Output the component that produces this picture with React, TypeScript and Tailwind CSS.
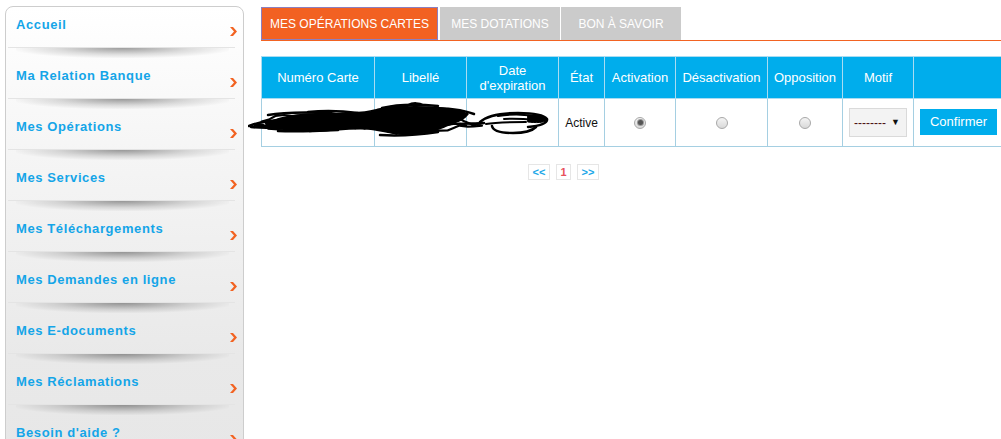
import React from "react";

const items = [
  "Accueil",
  "Ma Relation Banque",
  "Mes Opérations",
  "Mes Services",
  "Mes Téléchargements",
  "Mes Demandes en ligne",
  "Mes E-documents",
  "Mes Réclamations",
  "Besoin d'aide ?",
];

function Chevron() {
  return (
    <svg width="7" height="9" viewBox="0 0 7 9">
      <polygon points="0,0 3,0 7,4.5 3,9 0,9 4,4.5" fill="#f26322" />
    </svg>
  );
}

function Radio({ checked }: { checked?: boolean }) {
  return (
    <div className="mx-auto flex h-[12px] w-[12px] items-center justify-center rounded-full border border-[#a9a9a9] bg-[linear-gradient(#f4f4f4,#d9d9d9)]">
      {checked && <div className="h-[5px] w-[5px] rounded-full bg-[#555] shadow-[0_0_0_1px_#999]" />}
    </div>
  );
}

function envelope(x: number): [number, number] {
  const lerp = (a: number, b: number, t: number) => a + (b - a) * t;
  if (x < 17) return [22, 27];
  if (x < 30) return [lerp(19, 14, (x - 17) / 13), lerp(28, 31, (x - 17) / 13)];
  if (x < 72) return [14, 31];
  if (x < 127) return [12, 28];
  if (x < 140) return [lerp(10, 7, (x - 127) / 13), lerp(30, 35, (x - 127) / 13)];
  if (x < 200) return [6, 35];
  if (x < 216) return [lerp(8, 17, (x - 200) / 16), lerp(33, 27, (x - 200) / 16)];
  return [22, 26];
}

function buildStrokes(): string {
  let seed = 11;
  const rnd = () => {
    seed = (seed * 9301 + 49297) % 233280;
    return seed / 233280;
  };
  const out: string[] = [];
  for (let k = 0; k < 22; k++) {
    const f = rnd();
    const x0 = rnd() * 180;
    const len = 30 + rnd() * 90;
    const x1 = Math.min(234, x0 + len);
    let d = "";
    for (let x = x0; x <= x1; x += 5 + rnd() * 4) {
      const [t, b] = envelope(x);
      const y = t + (b - t) * f + (rnd() - 0.5) * 3;
      d += (d ? " L" : "M") + x.toFixed(1) + "," + y.toFixed(1);
    }
    out.push(d);
  }
  return out.join(" ");
}

const strokesD = buildStrokes();

function Scribble() {
  return (
    <svg
      className="pointer-events-none absolute left-[-13px] top-[44px]"
      width="305"
      height="40"
      viewBox="0 0 305 40"
    >
      <g fill="none" stroke="#000" strokeLinecap="round" strokeLinejoin="round">
        <path
          fill="#000"
          strokeWidth="1.5"
          d="M18,24 C28,18 40,16 52,15 C62,13 72,15 84,14 C100,12 114,14 127,10 C142,7 160,6 182,7 C198,8 210,10 220,14 C216,20 206,23 196,27 C182,33 166,35 152,34 C140,33 131,30 120,29 C104,28 90,30 72,31 C52,31 34,30 20,29 Z"
        />
        <path strokeWidth="2.2" d={strokesD} />
        <path strokeWidth="2.5" d="M1,26 C8,23 14,22 22,21 L40,19" />
        <path strokeWidth="2.5" d="M3,27 C14,28 24,28 34,28" />
        <path strokeWidth="2.5" d="M20,15 C40,12 60,13 75,12" />
        <path strokeWidth="2.5" d="M60,12 C80,10 95,11 110,13" />
        <path strokeWidth="2.5" d="M30,31 C50,32 70,31 90,30" />
        <path strokeWidth="2.5" d="M134,8 C150,4 170,4 190,6" />
        <path strokeWidth="2.5" d="M132,35 C150,36 170,35 190,32" />
        <path strokeWidth="2.5" d="M180,8 C200,8 215,10 226,14" />
        <path strokeWidth="2" d="M160,5 C165,2 172,3 175,5" />
        <path strokeWidth="2.5" d="M210,24 C220,23 228,24 236,23" />
        <path strokeWidth="2.5" d="M232,22 C240,15 255,13 270,13 C285,13 296,15 299,19 C300,23 292,26 280,27" />
        <path strokeWidth="2" d="M238,24 C248,22 262,22 278,22" />
        <path strokeWidth="2.5" d="M244,26 C245,31 252,33 265,33 C278,33 285,30 288,27" />
        <path strokeWidth="2" d="M250,16 C262,14 278,14 292,17" />
        <path strokeWidth="2" d="M256,19 C266,18 278,19 290,20" />
        <path strokeWidth="1" fill="#000" d="M280,15 C290,15 298,17 299,20 C296,23 288,23 280,22 Z" />
      </g>
    </svg>
  );
}

export default function App() {
  const font = { fontFamily: '"Liberation Sans", Arial, sans-serif' };
  return (
    <div className="flex h-[439px] w-[1001px] overflow-hidden bg-white" style={font}>
      {/* Sidebar */}
      <div className="ml-[5px] mt-[6px] h-[500px] w-[239px] shrink-0 rounded-t-[8px] border border-[#cdcdcd] bg-[linear-gradient(#ffffff,#f5f5f5_30%,#e9e9e9_70%,#e6e6e6)]">
        {items.map((label) => (
          <div key={label} className="relative h-[51px]">
            <div className="pl-[10px] pt-[10px] text-[13px] font-bold leading-[16px] tracking-[0.6px] text-[#14a5e8]">
              {label}
            </div>
            <div className="absolute right-[6px] top-[20px]">
              <Chevron />
            </div>
            <div className="absolute left-[2px] right-[8px] top-[40px] h-px bg-[#e4e4e4]" />
            <div className="absolute left-[10px] right-[14px] top-[41px] h-[10px] bg-[radial-gradient(ellipse_at_top,rgba(0,0,0,0.38),rgba(0,0,0,0.12)_45%,transparent_75%)]" />
          </div>
        ))}
      </div>

      {/* Main */}
      <div className="ml-[17px] flex-1">
        {/* Tabs */}
        <div className="mt-[7px] flex gap-px border-b border-[#f26322]">
          <div className="flex h-[33px] w-[177px] items-center justify-center border border-[#8c7fbf] bg-[#f26122] text-[12px] text-white">
            MES OPÉRATIONS CARTES
          </div>
          <div className="ml-px flex h-[33px] w-[120px] items-center justify-center bg-[#cbcbcb] text-[12px] text-white">
            MES DOTATIONS
          </div>
          <div className="flex h-[33px] w-[120px] items-center justify-center bg-[#cbcbcb] text-[12px] text-white">
            BON À SAVOIR
          </div>
        </div>

        {/* Table */}
        <div className="relative mt-[15px]">
          <table className="w-[760px] table-fixed border-collapse text-[13px]">
            <colgroup>
              <col className="w-[113px]" />
              <col className="w-[92px]" />
              <col className="w-[92px]" />
              <col className="w-[46px]" />
              <col className="w-[71px]" />
              <col className="w-[92px]" />
              <col className="w-[75px]" />
              <col className="w-[71px]" />
              <col className="w-[108px]" />
            </colgroup>
            <thead>
              <tr className="h-[42px] bg-[#00adec] text-white">
                {["Numéro Carte", "Libellé", "Date d'expiration", "État", "Activation", "Désactivation", "Opposition", "Motif", ""].map(
                  (h, i) => (
                    <th
                      key={i}
                      className={`border border-[#a9dcf2] px-0 text-center text-[13px] font-normal leading-[15px] ${i === 2 ? "px-[6px]" : ""}`}
                    >
                      {h}
                    </th>
                  )
                )}
              </tr>
            </thead>
            <tbody>
              <tr className="h-[48px]">
                <td className="border border-[#a5cfe2]" />
                <td className="border border-[#a5cfe2]" />
                <td className="border border-[#a5cfe2]" />
                <td className="border border-[#a5cfe2] text-center text-[12px] text-[#111]">Active</td>
                <td className="border border-[#a5cfe2]">
                  <Radio checked />
                </td>
                <td className="border border-[#a5cfe2]">
                  <Radio />
                </td>
                <td className="border border-[#a5cfe2]">
                  <Radio />
                </td>
                <td className="border border-[#a5cfe2]">
                  <div className="mx-auto flex h-[29px] w-[58px] items-center justify-between border border-[#dadada] bg-[#f3f3f3] pl-[4px] pr-[6px]">
                    <span className="text-[12px] leading-none text-[#4a1010]">--------</span>
                    <span className="text-[9px] leading-none text-[#111]">▼</span>
                  </div>
                </td>
                <td className="border border-[#a5cfe2] pl-[6px]">
                  <div className="mb-[2px] flex h-[26px] w-[77px] items-center justify-center bg-[#00adec] text-[13px] text-white">
                    Confirmer
                  </div>
                </td>
              </tr>
            </tbody>
          </table>
          <Scribble />
        </div>

        {/* Pagination */}
        <div className="ml-[267px] mt-[17px] flex gap-[6px] text-[11px] font-bold">
          <div className="flex h-[16px] w-[22px] items-center justify-center border border-[#e6e6e6] text-[#1aa7e8]">&lt;&lt;</div>
          <div className="flex h-[16px] w-[15px] items-center justify-center border border-[#e6e6e6] text-[#e8505b]">1</div>
          <div className="flex h-[16px] w-[22px] items-center justify-center border border-[#e6e6e6] text-[#1aa7e8]">&gt;&gt;</div>
        </div>
      </div>
    </div>
  );
}
